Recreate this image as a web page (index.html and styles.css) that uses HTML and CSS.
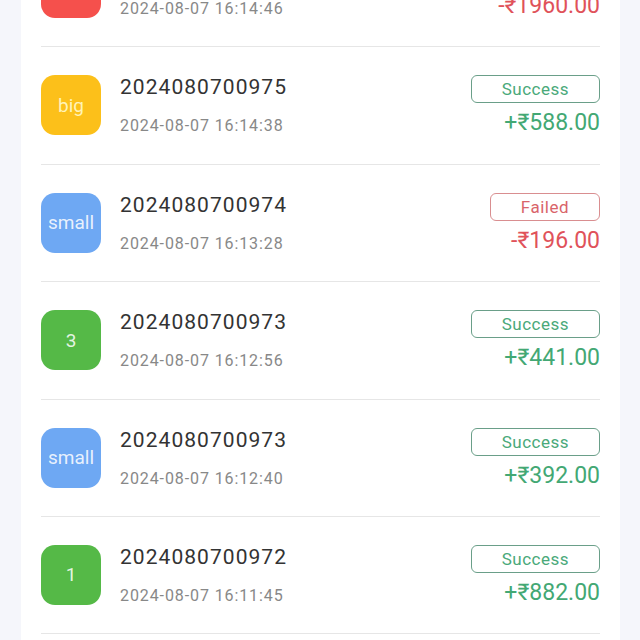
FILE: index.html
```html
<!DOCTYPE html>
<html lang="en">
<head>
    <meta charset="UTF-8">
    <meta name="viewport" content="width=device-width, initial-scale=1.0">
    <title>Transaction History</title>
    <link rel="stylesheet" href="styles.css">
</head>
<body>
    <div class="card">
        <div class="row">
            <div class="icon red">4</div>
            <div class="info">
                <div class="order">2024080700976</div>
                <div class="time">2024-08-07 16:14:46</div>
            </div>
            <div class="result">
                <span class="badge failed">Failed</span>
                <span class="amount minus">-₹1960.00</span>
            </div>
        </div>
        <div class="row">
            <div class="icon yellow">big</div>
            <div class="info">
                <div class="order">2024080700975</div>
                <div class="time">2024-08-07 16:14:38</div>
            </div>
            <div class="result">
                <span class="badge success">Success</span>
                <span class="amount plus">+₹588.00</span>
            </div>
        </div>
        <div class="row">
            <div class="icon blue">small</div>
            <div class="info">
                <div class="order">2024080700974</div>
                <div class="time">2024-08-07 16:13:28</div>
            </div>
            <div class="result">
                <span class="badge failed">Failed</span>
                <span class="amount minus">-₹196.00</span>
            </div>
        </div>
        <div class="row">
            <div class="icon green">3</div>
            <div class="info">
                <div class="order">2024080700973</div>
                <div class="time">2024-08-07 16:12:56</div>
            </div>
            <div class="result">
                <span class="badge success">Success</span>
                <span class="amount plus">+₹441.00</span>
            </div>
        </div>
        <div class="row">
            <div class="icon blue">small</div>
            <div class="info">
                <div class="order">2024080700973</div>
                <div class="time">2024-08-07 16:12:40</div>
            </div>
            <div class="result">
                <span class="badge success">Success</span>
                <span class="amount plus">+₹392.00</span>
            </div>
        </div>
        <div class="row">
            <div class="icon green">1</div>
            <div class="info">
                <div class="order">2024080700972</div>
                <div class="time">2024-08-07 16:11:45</div>
            </div>
            <div class="result">
                <span class="badge success">Success</span>
                <span class="amount plus">+₹882.00</span>
            </div>
        </div>
        <div class="row">
            <div class="icon yellow">big</div>
            <div class="info">
                <div class="order">2024080700971</div>
                <div class="time">2024-08-07 16:11:02</div>
            </div>
            <div class="result">
                <span class="badge success">Success</span>
                <span class="amount plus">+₹294.00</span>
            </div>
        </div>
    </div>
</body>
</html>
```

FILE: styles.css
```css
body {
    font-family: Roboto, "Noto Sans", "DejaVu Sans", sans-serif;
    margin: 0;
    padding: 0;
    background-color: #f5f6fb;
    overflow: hidden;
}
.card {
    margin: -70px 20px 0 21px;
    padding: 0 20px;
    background-color: #ffffff;
}
.row {
    display: flex;
    align-items: flex-start;
    height: 60px;
    padding: 28px 0 28.4px;
    border-bottom: 1px solid #e6e6e6;
}
.icon {
    width: 60px;
    height: 60px;
    border-radius: 14px;
    display: flex;
    align-items: center;
    justify-content: center;
    color: rgba(255, 255, 255, 0.85);
    font-size: 19px;
    flex-shrink: 0;
}
.red { background-color: #f5504c; }
.yellow { background-color: #fcc01a; color: #fff3b8; }
.blue { background-color: #6ea8f3; }
.green { background-color: #55b947; }
.info {
    flex: 1;
    margin-left: 19px;
    display: flex;
    flex-direction: column;
}
.order {
    font-size: 21px;
    line-height: 24px;
    letter-spacing: 1.05px;
    color: #333333;
}
.time {
    font-size: 16px;
    line-height: 18px;
    letter-spacing: 0.9px;
    color: #888888;
    margin-top: 18px;
}
.result {
    display: flex;
    flex-direction: column;
    align-items: flex-end;
}
.badge {
    height: 28px;
    box-sizing: border-box;
    padding: 0 30px;
    border: 1px solid;
    border-radius: 6px;
    font-size: 17px;
    line-height: 26px;
    letter-spacing: 0.5px;
}
.badge.success {
    color: #4aa97a;
    border-color: #6a9f89;
}
.badge.failed {
    color: #d9646a;
    border-color: #d98e90;
}
.amount {
    font-size: 23px;
    line-height: 26px;
    margin-top: 7px;
}
.plus { color: #43a874; }
.minus { color: #e0525a; }
```
